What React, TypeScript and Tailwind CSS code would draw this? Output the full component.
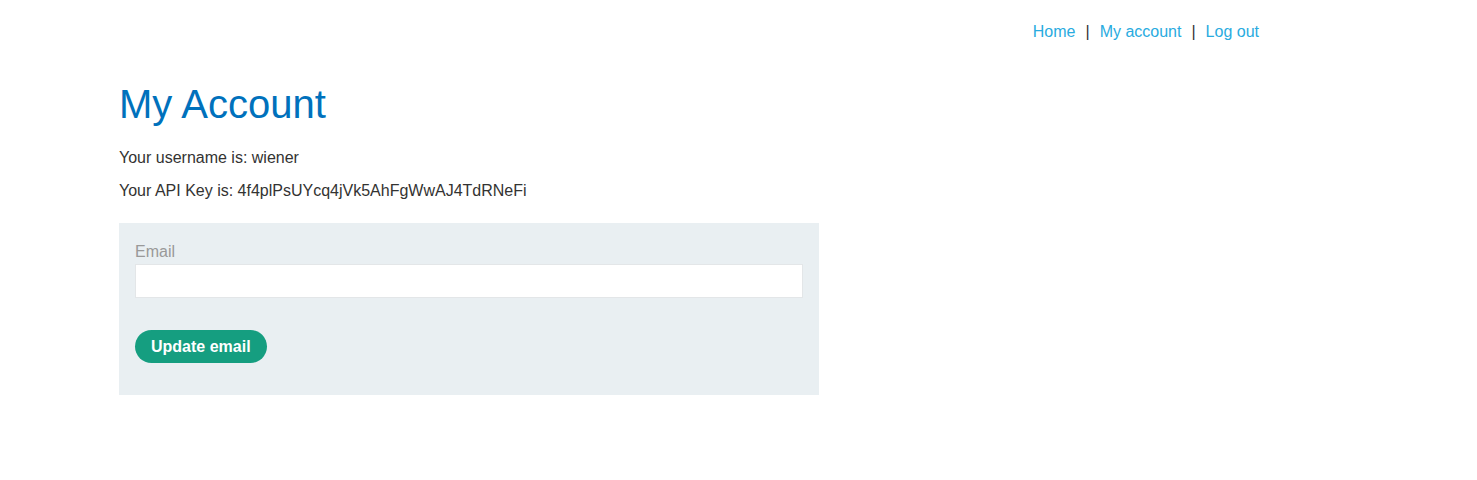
import React from 'react';

const NavLink: React.FC<{ children: React.ReactNode }> = ({ children }) => (
  <a href="#" className="text-[#29abe0] no-underline">
    {children}
  </a>
);

export default function App() {
  return (
    <div className="min-h-[480px] bg-white font-['Liberation_Sans',Arial,sans-serif] text-[16px] text-[#333332]">
      <div className="ml-[119px] w-[1140px]">
        {/* Top navigation */}
        <header className="flex justify-end pt-[22px] leading-[20px]">
          <NavLink>Home</NavLink>
          <span className="mx-[10px]">|</span>
          <NavLink>My account</NavLink>
          <span className="mx-[10px]">|</span>
          <NavLink>Log out</NavLink>
        </header>

        <h1 className="mt-[38px] text-[40px] leading-[48px] text-[#0071bc]">My Account</h1>

        <p className="mt-[20px] leading-[20px]">Your username is: wiener</p>
        <p className="mt-[13px] leading-[20px]">Your API Key is: 4f4plPsUYcq4jVk5AhFgWwAJ4TdRNeFi</p>

        {/* Email form */}
        <form className="mt-[22px] w-[700px] bg-[#e9eff2] px-4 pt-[19px] pb-[32px]">
          <label className="block leading-[20px] text-[#999]">Email</label>
          <input
            type="email"
            className="mt-[2px] block h-[34px] w-full border border-[#e3e6e8] bg-white px-2 outline-none"
          />
          <button
            type="button"
            className="mt-[32px] h-[33px] rounded-full bg-[#159e80] px-4 text-[16px] font-bold text-white"
          >
            Update email
          </button>
        </form>
      </div>
    </div>
  );
}
